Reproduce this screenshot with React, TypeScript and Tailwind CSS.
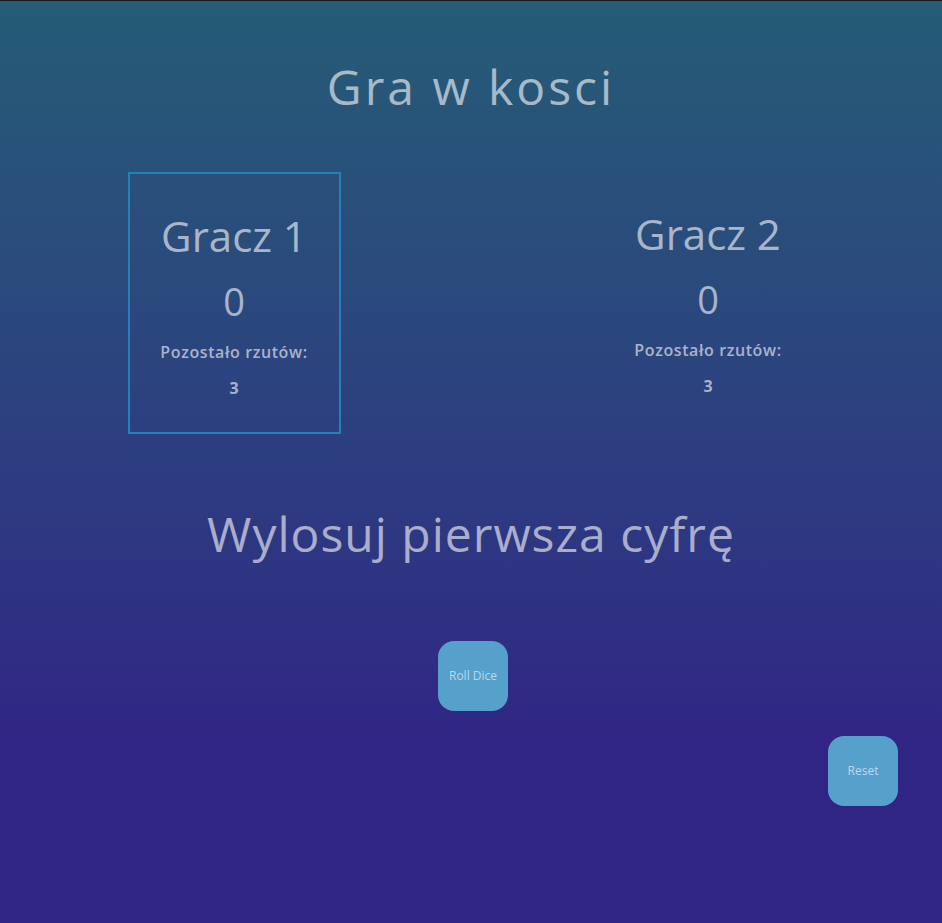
import React from "react";

type PlayerProps = {
  name: string;
  score: number;
  rollsLeft: number;
  active?: boolean;
};

function Player({ name, score, rollsLeft, active }: PlayerProps) {
  return (
    <div className="flex justify-center">
      <div
        className={
          active
            ? "w-[213px] border-2 border-[#2680b8] pt-[37px] pb-[32px] text-center"
            : "w-[213px] pt-[37px] pb-[32px] text-center"
        }
      >
        <h2 className="text-[42px] leading-[50px]">{name}</h2>
        <div className="mt-[17px] text-[38px] leading-[46px]">{score}</div>
        <p className="mt-[16px] text-[16px] leading-[24px] font-semibold tracking-[0.6px]">Pozostało rzutów:</p>
        <p className="mt-[12px] text-[16px] leading-[24px] font-bold">{rollsLeft}</p>
      </div>
    </div>
  );
}

export default function App() {
  return (
    <div
      className="min-h-screen border-t border-[#1b1b1b] bg-gradient-to-b from-[#255c76] to-[#302585] to-80% text-white/60"
      style={{ fontFamily: '"Open Sans", "Noto Sans", sans-serif' }}
    >
      <h1 className="pt-[50px] text-center text-[48px] leading-[72px] tracking-[3px]">Gra w kosci</h1>

      <div className="mt-[49px] grid grid-cols-2 gap-[6px]">
        <Player name="Gracz 1" score={0} rollsLeft={3} active />
        <Player name="Gracz 2" score={0} rollsLeft={3} />
      </div>

      <h2 className="mt-[64px] text-center text-[48px] leading-[72px] tracking-[1px]">Wylosuj pierwsza cyfrę</h2>

      <div className="mt-[71px] flex justify-center pl-[4px]">
        <button
          type="button"
          className="h-[70px] w-[70px] rounded-[16px] bg-[#56a0cc] text-[12px] text-white/60"
        >
          Roll Dice
        </button>
      </div>

      <div className="mt-[25px] flex justify-end pr-[44px]">
        <button
          type="button"
          className="h-[70px] w-[70px] rounded-[16px] bg-[#56a0cc] text-[12px] text-white/60"
        >
          Reset
        </button>
      </div>
    </div>
  );
}
